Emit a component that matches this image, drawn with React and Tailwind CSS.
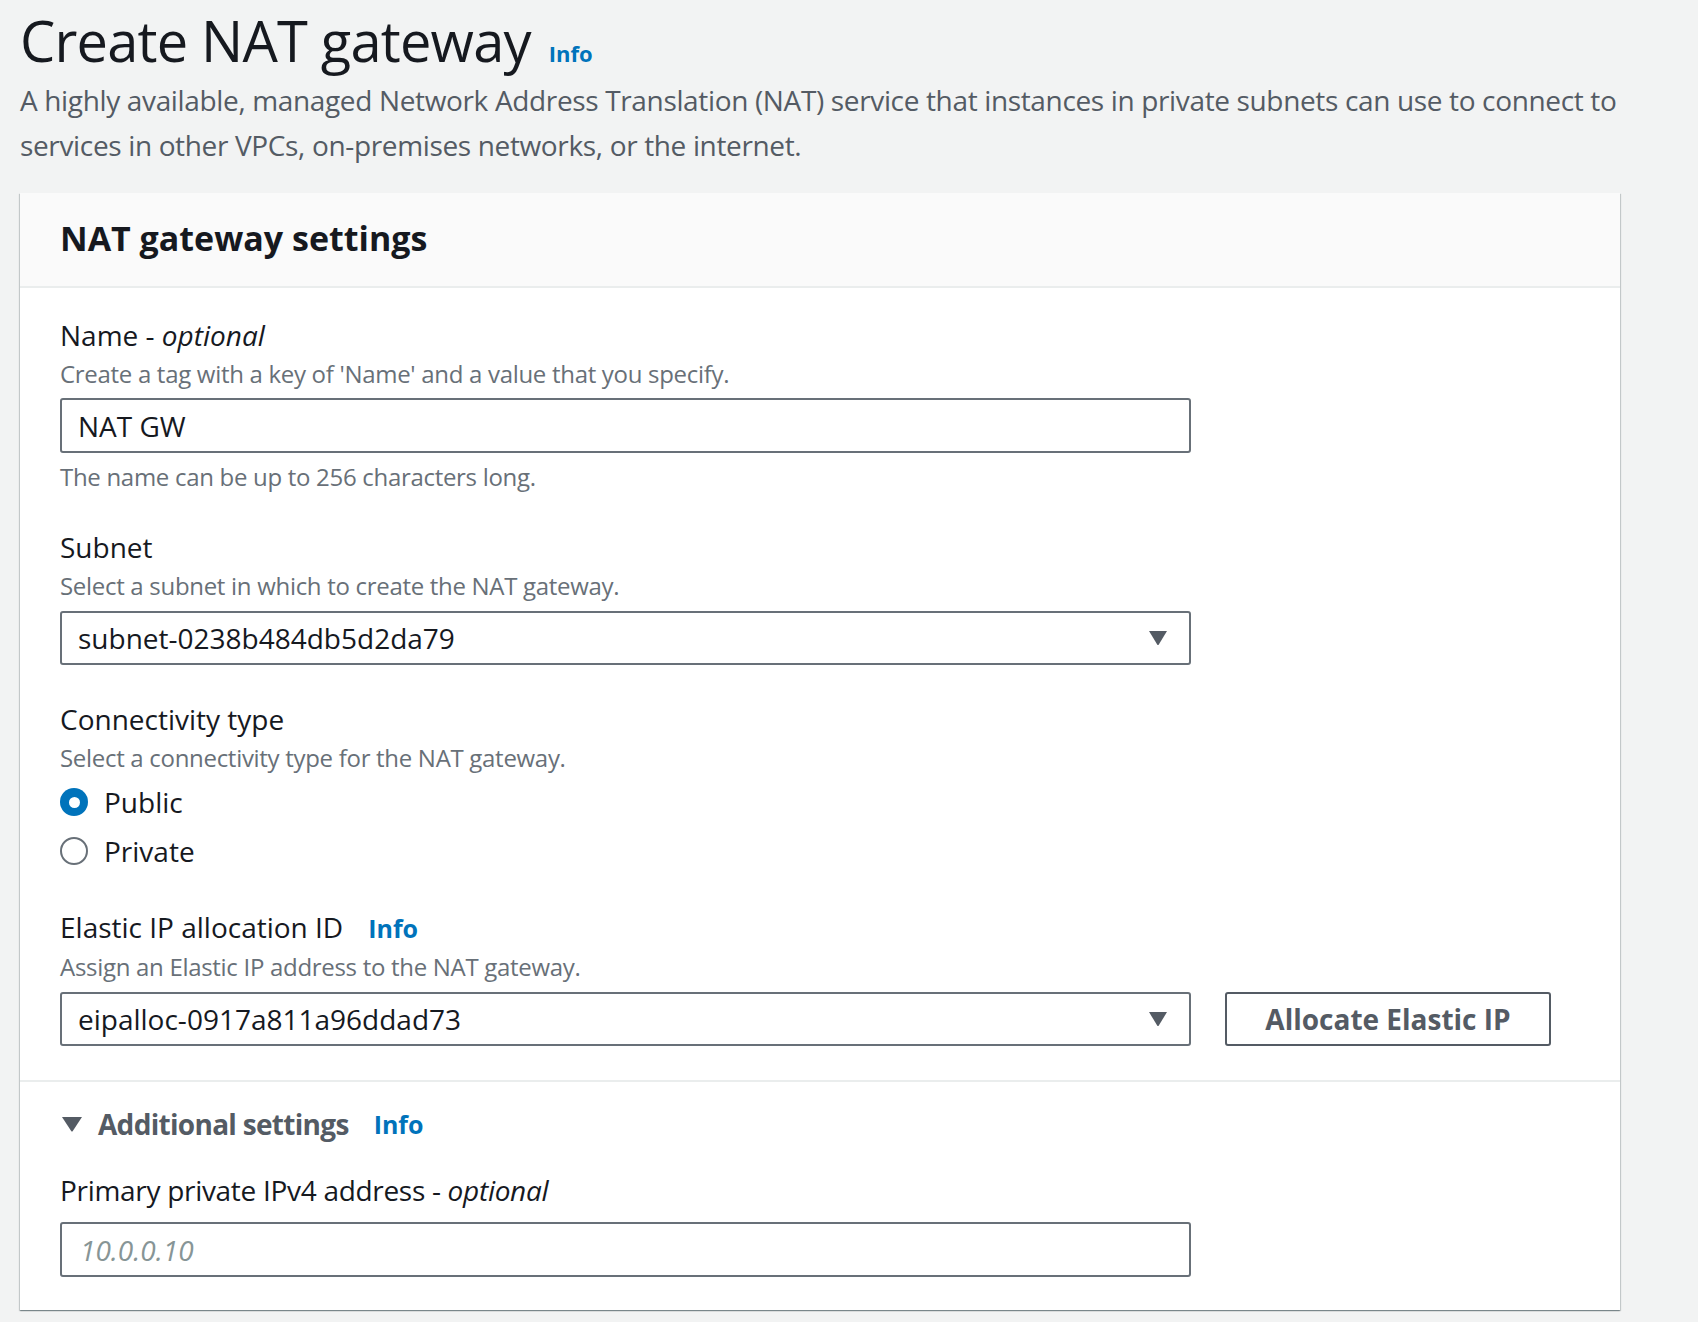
import React from 'react';

const InfoLink = ({ className = '' }) => (
  <a href="#" className={`font-bold text-[#0073bb] ${className}`}>
    Info
  </a>
);

const Caret = () => (
  <svg width="20" height="16" viewBox="0 0 20 16" className="shrink-0">
    <path d="M1 1 H19 L10.8 14.6 Q10 15.6 9.2 14.6 Z" fill="#545b64" />
  </svg>
);

const SelectBox = ({ value }) => (
  <div className="flex items-center justify-between w-[1131px] h-[54px] border-2 border-[#687078] rounded-[3px] bg-white pl-[16px] pr-[21px]">
    <span className="text-[28px] leading-[40px] text-[#16191f]">{value}</span>
    <Caret />
  </div>
);

const Radio = ({ checked, label, className = '' }) => (
  <label className={`flex items-center h-[40px] ${className}`}>
    {checked ? (
      <span className="w-[28px] h-[28px] rounded-full bg-[#0073bb] flex items-center justify-center">
        <span className="w-[11px] h-[11px] rounded-full bg-white" />
      </span>
    ) : (
      <span className="w-[28px] h-[28px] rounded-full border-2 border-[#687078] bg-white" />
    )}
    <span className="ml-[16px] text-[28px] leading-[40px] text-[#16191f]">{label}</span>
  </label>
);

export default function App() {
  return (
    <div className="min-h-[1322px] bg-[#f2f3f3] font-['Open_Sans',sans-serif] pl-[20px] pr-[40px]">
      <div className="pt-[8px] flex items-baseline">
        <h1 className="text-[56px] leading-[64px] tracking-[-0.8px] text-[#16191f]">Create NAT gateway</h1>
        <InfoLink className="ml-[18px] text-[22px]" />
      </div>
      <p className="mt-[6px] text-[28px] leading-[45px] tracking-[-0.35px] text-[#545b64] max-w-[1625px]">
        A highly available, managed Network Address Translation (NAT) service that instances in private subnets can use to connect to services in other VPCs, on-premises networks, or the internet.
      </p>

      <div className="mt-[25px] w-[1600px] bg-white shadow-[0_1px_1px_0_rgba(0,28,36,0.3),1px_1px_1px_0_rgba(0,28,36,0.15),-1px_1px_1px_0_rgba(0,28,36,0.15)]">
        <div className="h-[95px] bg-[#fafafa] border-b-2 border-[#eaeded] px-[40px] pt-[25px]">
          <h2 className="text-[34px] leading-[40px] font-bold text-[#16191f]">NAT gateway settings</h2>
        </div>

        <div className="px-[40px] pt-[27px] pb-[34px] border-b-2 border-[#eaeded]">
          <div className="text-[28px] leading-[40px] text-[#16191f]">
            Name - <i>optional</i>
          </div>
          <div className="mt-[3px] text-[24px] leading-[32px] tracking-[-0.3px] text-[#687078]">
            Create a tag with a key of 'Name' and a value that you specify.
          </div>
          <div className="mt-[8px] w-[1131px] h-[55px] border-2 border-[#687078] rounded-[3px] bg-white pl-[16px] flex items-center">
            <span className="text-[28px] leading-[40px] text-[#16191f]">NAT GW</span>
          </div>
          <div className="mt-[8px] text-[24px] leading-[32px] tracking-[-0.3px] text-[#687078]">
            The name can be up to 256 characters long.
          </div>

          <div className="mt-[34px] text-[28px] leading-[40px] text-[#16191f]">Subnet</div>
          <div className="mt-[3px] text-[24px] leading-[32px] tracking-[-0.3px] text-[#687078]">
            Select a subnet in which to create the NAT gateway.
          </div>
          <div className="mt-[9px]">
            <SelectBox value="subnet-0238b484db5d2da79" />
          </div>

          <div className="mt-[34px] text-[28px] leading-[40px] text-[#16191f]">Connectivity type</div>
          <div className="mt-[3px] text-[24px] leading-[32px] tracking-[-0.3px] text-[#687078]">
            Select a connectivity type for the NAT gateway.
          </div>
          <Radio checked label="Public" className="mt-[8px]" />
          <Radio label="Private" className="mt-[9px]" />

          <div className="mt-[36px] flex items-baseline text-[28px] leading-[40px] text-[#16191f]">
            <span>Elastic IP allocation ID</span>
            <InfoLink className="ml-[25px] text-[25px]" />
          </div>
          <div className="mt-[3px] text-[24px] leading-[32px] tracking-[-0.3px] text-[#687078]">
            Assign an Elastic IP address to the NAT gateway.
          </div>
          <div className="mt-[9px] flex items-center gap-[34px]">
            <SelectBox value="eipalloc-0917a811a96ddad73" />
            <button className="w-[326px] h-[54px] border-2 border-[#545b64] rounded-[3px] bg-white text-[28px] font-bold text-[#545b64]">
              Allocate Elastic IP
            </button>
          </div>
        </div>

        <div className="px-[40px] pt-[22px] pb-[33px]">
          <div className="flex items-center h-[40px]">
            <svg width="20" height="15" viewBox="0 0 20 15" className="ml-[2px]">
              <path d="M0 0 H20 L10.8 14 Q10 15 9.2 14 Z" fill="#545b64" />
            </svg>
            <span className="ml-[16px] text-[28px] leading-[40px] font-bold tracking-[-0.7px] text-[#545b64]">Additional settings</span>
            <InfoLink className="ml-[25px] text-[25px] leading-[40px]" />
          </div>
          <div className="mt-[26px] text-[28px] leading-[40px] tracking-[-0.3px] text-[#16191f]">
            Primary private IPv4 address - <i>optional</i>
          </div>
          <div className="mt-[12px] w-[1131px] h-[55px] border-2 border-[#687078] rounded-[3px] bg-white pl-[18px] flex items-center">
            <span className="text-[28px] leading-[40px] italic text-[#879596]">10.0.0.10</span>
          </div>
        </div>
      </div>
    </div>
  );
}
